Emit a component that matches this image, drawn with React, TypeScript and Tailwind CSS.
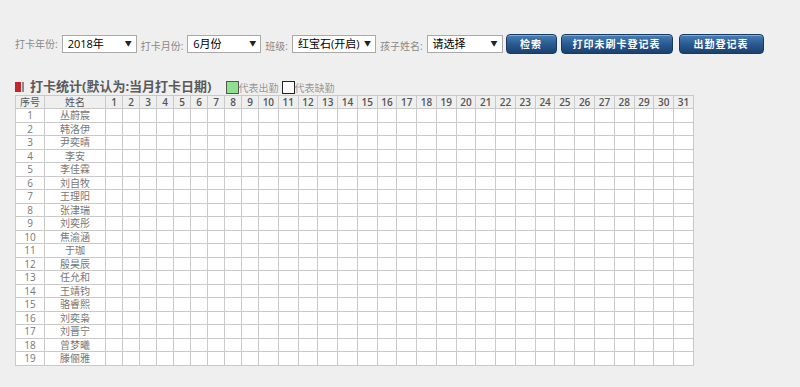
import React from "react";

const names = [
  "丛蔚宸",
  "韩洛伊",
  "尹奕晴",
  "李安",
  "李佳霖",
  "刘自牧",
  "王理阳",
  "张津瑞",
  "刘奕彤",
  "焦渝涵",
  "于珈",
  "殷昊辰",
  "任允和",
  "王靖钧",
  "骆睿熙",
  "刘奕枭",
  "刘晋宁",
  "曾梦曦",
  "滕俪雅",
];

const days = Array.from({ length: 31 }, (_, i) => i + 1);

const font = { fontFamily: '"Open Sans", "Noto Sans CJK SC", sans-serif' };

function FakeSelect({ value, width }: { value: string; width: string }) {
  return (
    <div
      className={`flex h-[18px] items-center justify-between border border-[#a9a9a9] bg-white pl-[5px] pr-[4px] text-[11px] text-black ${width}`}
    >
      <span>{value}</span>
      <span className="text-[7px] text-[#222]">▼</span>
    </div>
  );
}

function Label({ children }: { children: React.ReactNode }) {
  return <span className="text-[10px] text-[#888]">{children}</span>;
}

function Btn({ children, width }: { children: React.ReactNode; width: string }) {
  return (
    <button
      className={`flex h-[20px] items-center justify-center rounded-[4px] border border-[#153a63] bg-gradient-to-b from-[#4a7fb8] via-[#2a5a92] to-[#1b416e] text-[10px] font-bold tracking-[1px] text-white shadow-[inset_0_1px_0_rgba(255,255,255,0.35)] ${width}`}
    >
      {children}
    </button>
  );
}

export default function App() {
  return (
    <div className="h-[387px] w-[800px] overflow-hidden bg-[#efefef]" style={font}>
      {/* filter bar */}
      <div className="flex items-center pl-[15px] pt-[32px]">
        <Label>打卡年份:</Label>
        <div className="ml-[4px]">
          <FakeSelect value="2018年" width="w-[75px]" />
        </div>
        <div className="ml-[4px]">
          <Label>打卡月份:</Label>
        </div>
        <div className="ml-[4px]">
          <FakeSelect value="6月份" width="w-[74px]" />
        </div>
        <div className="ml-[4px]">
          <Label>班级:</Label>
        </div>
        <div className="ml-[4px]">
          <FakeSelect value="红宝石(开启)" width="w-[84px]" />
        </div>
        <div className="ml-[4px]">
          <Label>孩子姓名:</Label>
        </div>
        <div className="ml-[4px]">
          <FakeSelect value="请选择" width="w-[76px]" />
        </div>
        <div className="ml-[3px] flex gap-[4px]">
          <Btn width="w-[51px]">检索</Btn>
          <Btn width="w-[112px]">打印未刷卡登记表</Btn>
          <div className="ml-[2px]">
            <Btn width="w-[85px]">出勤登记表</Btn>
          </div>
        </div>
      </div>

      {/* title + legend */}
      <div className="mt-[22px] flex h-[16px] items-end pl-[15px]">
        <div className="mb-[2px] flex items-stretch">
          <div className="h-[10px] w-[6px] bg-[#c0262a]" />
          <div className="ml-[1px] h-[10px] w-[2px] bg-[#8a8a8a]" />
        </div>
        <span className="ml-[6px] text-[13px] font-bold leading-[16px] text-[#5a5a5a]">
          打卡统计(默认为:当月打卡日期)
        </span>
        <div className="ml-[14px] flex items-end">
          <div className="h-[13px] w-[13px] border border-[#555] bg-[#8fe08f]" />
          <span className="text-[10px] leading-[12px] text-[#999]">代表出勤</span>
          <div className="ml-[3px] h-[13px] w-[13px] border border-[#222] bg-white" />
          <span className="text-[10px] leading-[12px] text-[#999]">代表缺勤</span>
        </div>
      </div>

      {/* table */}
      <div className="ml-[15px] mt-[1px] w-[679px]">
        <table className="w-[679px] table-fixed border-collapse bg-white text-[10px] text-[#777]">
          <colgroup>
            <col className="w-[29px]" />
            <col className="w-[61px]" />
            {days.map((d) => (
              <col key={d} className={d < 10 ? "w-[17px]" : ""} />
            ))}
          </colgroup>
          <thead>
            <tr className="h-[13px] bg-[#efefef]">
              <th className="border border-[#c9c9c9] p-0 text-[10px] font-normal leading-[12px] text-[#555]">
                序号
              </th>
              <th className="border border-[#c9c9c9] p-0 text-[10px] font-normal leading-[12px] text-[#555]">
                姓名
              </th>
              {days.map((d) => (
                <th
                  key={d}
                  className="border border-[#c9c9c9] p-0 text-[10px] font-semibold leading-[12px] text-[#555]"
                >
                  {d}
                </th>
              ))}
            </tr>
          </thead>
          <tbody>
            {names.map((n, i) => (
              <tr key={n} className="h-[13.5px]">
                <td className="border border-[#c9c9c9] p-0 text-center leading-[12px]">{i + 1}</td>
                <td className="border border-[#c9c9c9] p-0 text-center leading-[12px]">{n}</td>
                {days.map((d) => (
                  <td key={d} className="border border-[#c9c9c9] p-0" />
                ))}
              </tr>
            ))}
          </tbody>
        </table>
      </div>
    </div>
  );
}
